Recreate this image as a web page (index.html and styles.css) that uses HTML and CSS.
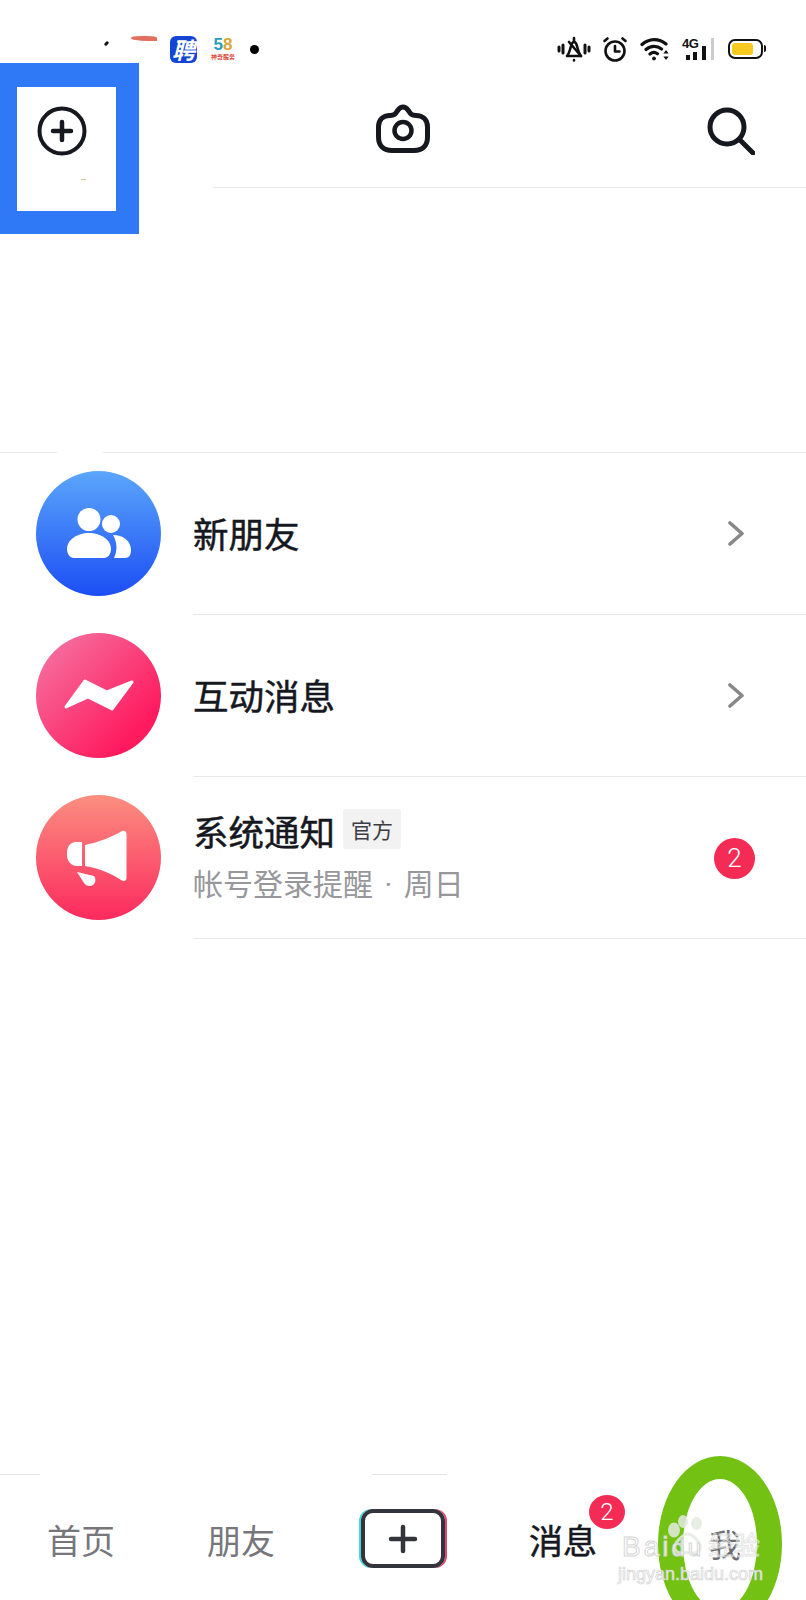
FILE: index.html
```html
<!DOCTYPE html>
<html lang="zh-CN">
<head>
  <meta charset="UTF-8">
  <title>消息</title>
  <link rel="stylesheet" href="styles.css">
</head>
<body>
<div class="phone">

  <div class="status">
    <div class="status-left">
      <span class="tick"></span>
      <span class="streak"></span>
      <span class="app-pin">聘</span>
      <span class="app-58"><b><i class="c1">5</i><i class="c2">8</i></b><em>神奇服务</em></span>
      <span class="dot"></span>
    </div>
    <div class="status-right">
      <svg class="ic-bell" width="34" height="26" viewBox="0 0 34 26" fill="none" stroke="#111" stroke-width="2.600" stroke-linecap="round" stroke-linejoin="round">
        <path d="M2 11v4M6 9v8M28 9v8M32 11v4" stroke-width="3"/>
        <path d="M10 20c2-2 3-6 4-10 .5-2 1.500-4 3-4s2.500 2 3 4c1 4 2 8 4 10z"/>
        <path d="M17 2v3M12 6l12 14M17 24v.5"/>
      </svg>
      <svg width="26" height="26" viewBox="0 0 26 26" fill="none" stroke="#111" stroke-width="2.600" stroke-linecap="round" stroke-linejoin="round">
        <circle cx="13" cy="15" r="9.500"/>
        <path d="M13 10v5.500h4.500M2.500 5l3-2.500M23.500 5l-3-2.500"/>
      </svg>
      <svg width="30" height="24" viewBox="0 0 30 24" fill="none" stroke="#111" stroke-width="3.200" stroke-linecap="round">
        <path d="M2 7.500c7-6.500 17-6.500 24-.5M6 12.500c4.500-4 11-4 15.500-.5M10 17c2.500-2 5-2 7.500-.3"/>
        <circle cx="14" cy="21.500" r="1.500" fill="#111" stroke-width="1"/>
        <path d="M26 14l-1.500 2h3zM26 22l-1.500-2h3z" stroke-width="1.200" fill="#111"/>
      </svg>
      <div class="cell">
        <span class="g4">4G</span>
        <svg width="33" height="24" viewBox="0 0 33 24">
          <rect x="4" y="18" width="4" height="5" fill="#111"/>
          <rect x="11" y="15" width="4" height="8" fill="#111"/>
          <rect x="20" y="9" width="4" height="14" fill="#111"/>
          <rect x="29" y="1" width="3" height="22" fill="#ccc"/>
        </svg>
      </div>
      <div class="battery"><span class="level"></span></div>
    </div>
  </div>

  <div class="nav">
    <svg class="nav-camera" width="54" height="54" viewBox="0 0 54 54" fill="none" stroke="#16181f" stroke-width="5" stroke-linejoin="round">
      <path d="M14 12.500c5 0 6-2.500 8-5.500 1.500-2 3-3 5-3s3.500 1 5 3c2 3 3 5.500 8 5.500 7 0 11.500 4.500 11.500 11.500v10c0 9-5.500 13.500-13.500 13.500H16C8 47.500 2.500 43 2.500 34V24C2.500 17 7 12.500 14 12.500z"/>
      <circle cx="27" cy="27.500" r="8.500" stroke-width="4.500"/>
    </svg>
    <svg class="nav-search" width="48" height="48" viewBox="0 0 48 48" fill="none" stroke="#16181f" stroke-width="5" stroke-linecap="round">
      <circle cx="20" cy="20" r="17"/>
      <path d="M33 33l13 13"/>
    </svg>
  </div>
  <div class="nav-rule"></div>

  <div class="blank-top"></div>

  <div class="broken-rule">
    <span class="seg-a"></span>
    <span class="seg-b"></span>
  </div>

  <div class="row">
    <div class="avatar av-blue">
      <svg width="64" height="50" viewBox="0 0 64 50" fill="#fff">
        <circle cx="22" cy="11.500" r="11.500"/>
        <circle cx="44" cy="16" r="9"/>
        <path d="M0 41c0-9 10-16 22-16s22 7 22 16c0 5-3 9-7 9H7c-4 0-7-4-7-9z"/>
        <path d="M46 27c10 0 18 6 18 15 0 5-2 8-6 8H47c3-6 4-15-1-23z"/>
      </svg>
    </div>
    <div class="row-main">
      <div class="row-text"><div class="title">新朋友</div></div>
      <svg class="chev" width="16" height="25" viewBox="0 0 16 25" fill="none" stroke="#888" stroke-width="3.600" stroke-linecap="round" stroke-linejoin="round"><path d="M2 2l12 10.500L2 23"/></svg>
    </div>
  </div>

  <div class="row">
    <div class="avatar av-pink">
      <svg width="72" height="34" viewBox="0 0 72 34" fill="#fff" stroke="#fff" stroke-width="3" stroke-linejoin="round">
        <polygon points="3,29 22,3 44,14 69,4 49,31 25,19"/>
      </svg>
    </div>
    <div class="row-main">
      <div class="row-text"><div class="title">互动消息</div></div>
      <svg class="chev" width="16" height="25" viewBox="0 0 16 25" fill="none" stroke="#888" stroke-width="3.600" stroke-linecap="round" stroke-linejoin="round"><path d="M2 2l12 10.500L2 23"/></svg>
    </div>
  </div>

  <div class="row">
    <div class="avatar av-coral">
      <svg class="ic-horn" width="60" height="58" viewBox="0 0 60 58" fill="#fff">
        <path d="M18 15C32 12 45 7 55 1c2-1 4.500 0 4.500 3v44c0 3-2.500 4-5.500 2-9-6-22-12-36-14z"/>
        <path d="M15 12H9c-6 0-9 5-9 11v2c0 6 4 11 10 11h5z"/>
        <path d="M10 42l17 4c2 2 2 7-1 9-3 2-7 1-9-2z"/>
      </svg>
    </div>
    <div class="row-main">
      <div class="row-text">
        <div class="title-line">
          <span class="title">系统通知</span>
          <span class="tag">官方</span>
        </div>
        <div class="sub">帐号登录提醒 · 周日</div>
      </div>
      <span class="count">2</span>
    </div>
  </div>

  <div class="blank-fill"></div>

  <div class="tab-rule">
    <span class="seg-c"></span>
    <span class="seg-d"></span>
  </div>

  <div class="tabbar">
    <span class="tab">首页</span>
    <span class="tab tab-friend">朋友</span>
    <div class="publish">
      <svg width="38" height="38" viewBox="0 0 38 38" stroke="#34343d" stroke-width="4.500" stroke-linecap="round"><path d="M19 7v24M7 19h24"/></svg>
    </div>
    <span class="tab tab-msg">消息<span class="msg-badge">2</span></span>
    <span class="tab tab-me">我</span>
  </div>

  <!-- annotations added on top of the screenshot -->
  <div class="mark-box">
    <div class="mark-inner">
      <svg width="50" height="50" viewBox="0 0 50 50" fill="none" stroke="#16181f" stroke-linecap="round">
        <circle cx="25" cy="25" r="22.500" stroke-width="4"/>
        <path d="M25 16v18M16 25h18" stroke-width="4.500"/>
      </svg>
      <span class="speck"></span>
    </div>
  </div>
  <div class="mark-ring"></div>
  <div class="watermark">
    <svg class="paw" width="38" height="42" viewBox="0 0 38 42" fill="#e4ebe2">
      <ellipse cx="6" cy="17" rx="6" ry="7.500"/>
      <ellipse cx="15" cy="8.500" rx="5" ry="6.500"/>
      <ellipse cx="28.500" cy="10.500" rx="5.500" ry="6.500"/>
      <path d="M20 21c5 0 8 5 11 9 3 5 0 11-6 10-4-.7-7-.7-11 0-6 1-9-5-6-10 3-4 7-9 12-9z" fill="none" stroke="#e4ebe2" stroke-width="3"/>
    </svg>
    <span class="wm-bai">Bai<i>du</i></span>
    <span class="wm-jy">经验</span>
    <span class="wm-url">jingyan.baidu.com</span>
  </div>

</div>
</body>
</html>
```

FILE: styles.css
```css
* {
  box-sizing: border-box;
}
body {
  margin: 0;
  background: #fff;
  font-family: "Noto Sans CJK SC", "Noto Sans", sans-serif;
  color: #16181f;
}
.phone {
  position: relative;
  width: 806px;
  height: 1600px;
  overflow: hidden;
  display: flex;
  flex-direction: column;
  background: #fff;
}

/* status bar */
.status {
  height: 98px;
  padding: 34px 41px 0 96px;
  display: flex;
  justify-content: space-between;
  align-items: flex-start;
}
.status-left {
  display: flex;
  align-items: flex-start;
  height: 30px;
}
.tick {
  width: 5px;
  height: 3px;
  margin: 8px 22px 0 8px;
  background: #111;
  border-radius: 2px;
  transform: rotate(-45deg);
}
.streak {
  width: 26px;
  height: 5px;
  margin: 2px 13px 0 0;
  background: #e2705c;
  border-radius: 60% 60% 0 100%;
}
.app-pin {
  width: 27px;
  height: 27px;
  margin-top: 2px;
  background: #1445d5;
  border-radius: 6px;
  color: #fff;
  font-size: 23px;
  line-height: 27px;
  text-align: center;
  font-weight: 700;
  font-style: italic;
}
.app-58 {
  width: 28px;
  margin: 3px 13px 0 12px;
  display: flex;
  flex-direction: column;
  align-items: center;
}
.app-58 b {
  font: 700 17px/16px "Liberation Sans", sans-serif;
}
.app-58 i {
  font-style: normal;
}
.c1 {
  color: #2a9bc0;
}
.c2 {
  color: #d9a632;
}
.app-58 em {
  font-size: 6px;
  line-height: 7px;
  font-weight: 700;
  font-style: normal;
  color: #d8483a;
  white-space: nowrap;
}
.dot {
  width: 9px;
  height: 9px;
  margin-top: 11px;
  background: #000;
  border-radius: 50%;
}
.status-right {
  display: flex;
  align-items: center;
  gap: 12px;
  height: 30px;
}
.ic-bell {
  margin-right: -1px;
}
.cell {
  position: relative;
  width: 33px;
  height: 24px;
}
.g4 {
  position: absolute;
  left: 0;
  top: 0;
  font: 700 13px/13px "Liberation Sans", sans-serif;
  letter-spacing: -0.5px;
  color: #111;
}
.battery {
  position: relative;
  width: 35px;
  height: 20px;
  margin: 0 2px 0 1px;
  padding: 2px;
  border: 2.5px solid #111;
  border-radius: 7px;
}
.battery::after {
  content: "";
  position: absolute;
  right: -4.500px;
  top: 4px;
  width: 2px;
  height: 7px;
  background: #111;
  border-radius: 0 2px 2px 0;
}
.level {
  display: block;
  width: 21px;
  height: 100%;
  background: #f8c91f;
  border-radius: 3px;
}

/* top nav */
.nav {
  height: 89px;
  padding: 0 51px 0 376px;
  display: flex;
  align-items: flex-start;
  justify-content: space-between;
}
.nav-camera {
  margin-top: 5px;
}
.nav-search {
  margin-top: 9px;
}
.nav-rule {
  height: 1px;
  margin-left: 213px;
  background: #e8e8e8;
}

.blank-top {
  height: 264px;
}
.blank-fill {
  flex: 1;
}
.broken-rule {
  display: flex;
  justify-content: space-between;
  height: 1px;
}
.seg-a {
  width: 57px;
  background: #e8e8e8;
}
.seg-b {
  width: 703px;
  background: #e8e8e8;
}

/* list rows */
.row {
  height: 162px;
  padding-left: 36px;
  display: flex;
  align-items: center;
  gap: 32px;
}
.avatar {
  flex: none;
  width: 125px;
  height: 125px;
  margin-top: -2px;
  border-radius: 50%;
  display: flex;
  align-items: center;
  justify-content: center;
}
.av-blue {
  background: linear-gradient(180deg, #5ba6fb, #1c4ef4);
}
.av-pink {
  background: linear-gradient(135deg, #f56e9e 10%, #ff1a5e 80%);
}
.av-coral {
  background: linear-gradient(180deg, #fb8f80, #fc2a5e);
}
.ic-horn {
  margin: 3px 3px 0 0;
}
.row-main {
  flex: 1;
  height: 100%;
  padding-right: 51px;
  border-bottom: 1px solid #e8e8e8;
  display: flex;
  align-items: center;
  justify-content: space-between;
}
.title {
  font-size: 35.500px;
  line-height: 44px;
  font-weight: 400;
  -webkit-text-stroke: 0.5px #16181f;
  color: #16181f;
}
.row-text {
  margin-top: -2px;
}
.title-line {
  display: flex;
  align-items: center;
  gap: 8px;
}
.tag {
  width: 58px;
  height: 40px;
  margin-top: -3px;
  background: #f2f2f2;
  border-radius: 3px;
  font-size: 21px;
  line-height: 40px;
  text-align: center;
  color: #3c3c44;
}
.sub {
  margin-top: 12px;
  font-family: Roboto, "Noto Sans CJK SC", sans-serif;
  font-size: 30px;
  line-height: 40px;
  word-spacing: 4px;
  color: #97979c;
}
.chev {
  margin-right: 11px;
}
.count {
  width: 41px;
  height: 41px;
  margin-top: 2px;
  border-radius: 50%;
  background: #f42c55;
  color: #fff;
  font: 300 26px/41px Roboto, sans-serif;
  text-align: center;
}

/* bottom tabs */
.tab-rule {
  position: relative;
  height: 1px;
}
.seg-c,
.seg-d {
  position: absolute;
  top: 0;
  height: 1px;
  background: #e4e4e4;
}
.seg-c {
  left: 0;
  width: 40px;
}
.seg-d {
  left: 372px;
  width: 75px;
}
.tabbar {
  height: 125px;
  padding: 34px 0 0 47px;
  display: flex;
  align-items: flex-start;
}
.tab {
  font-size: 34px;
  line-height: 62px;
  color: #77777b;
}
.tab-friend {
  margin-left: 92px;
}
.publish {
  width: 84px;
  height: 59px;
  margin-left: 86px;
  border: 4.500px solid #34343d;
  border-radius: 12px;
  box-shadow: -2px 0 0 #46d7df, 2px 0 0 #e8446c;
  display: flex;
  align-items: center;
  justify-content: center;
}
.tab-msg {
  position: relative;
  margin-left: 84px;
  color: #16181f;
  -webkit-text-stroke: 0.5px #16181f;
}
.msg-badge {
  position: absolute;
  left: 60px;
  top: -14px;
  width: 36px;
  height: 34px;
  border-radius: 50%;
  background: #f42c55;
  color: #fff;
  font: 300 24px/34px Roboto, sans-serif;
  -webkit-text-stroke: 0;
  text-align: center;
}
.tab-me {
  margin-left: 112px;
  margin-top: 3px;
  font-size: 32px;
  color: #6d6d72;
}

/* annotations */
.mark-box {
  position: absolute;
  left: 0;
  top: 63px;
  width: 139px;
  height: 171px;
  padding: 24px 23px 23px 17px;
  background: #2f78f6;
}
.mark-inner {
  position: relative;
  height: 100%;
  padding: 19px 0 0 20px;
  background: #fff;
}
.speck {
  position: absolute;
  left: 64px;
  top: 92px;
  width: 5px;
  height: 1px;
  background: #d8c98a;
}
.mark-ring {
  position: absolute;
  left: 658px;
  top: 1456px;
  width: 124px;
  height: 176px;
  border-radius: 50%;
  border-style: solid;
  border-color: #72c113;
  border-width: 23px 25px 22px 25px;
}
.watermark {
  position: absolute;
  left: 610px;
  top: 1500px;
  width: 170px;
  height: 100px;
  font-family: "Liberation Sans", sans-serif;
}
.paw {
  position: absolute;
  left: 58px;
  top: 13px;
  opacity: 0.85;
}
.wm-bai {
  position: absolute;
  left: 12px;
  top: 30px;
  font-size: 28px;
  line-height: 34px;
  letter-spacing: 3px;
  color: rgba(255, 255, 255, 0.8);
  -webkit-text-stroke: 1px #d6d6d6;
}
.wm-bai i {
  font-style: normal;
  font-size: 24px;
}
.wm-jy {
  position: absolute;
  left: 98px;
  top: 28px;
  font: 26px/32px "Noto Sans CJK SC", sans-serif;
  color: rgba(255, 255, 255, 0.3);
  -webkit-text-stroke: 1px rgba(222, 222, 222, 0.8);
}
.wm-url {
  position: absolute;
  left: 8px;
  top: 63px;
  font-size: 18px;
  line-height: 22px;
  white-space: nowrap;
  color: rgba(255, 255, 255, 0.85);
  -webkit-text-stroke: 0.7px #d2d2d2;
}
```
